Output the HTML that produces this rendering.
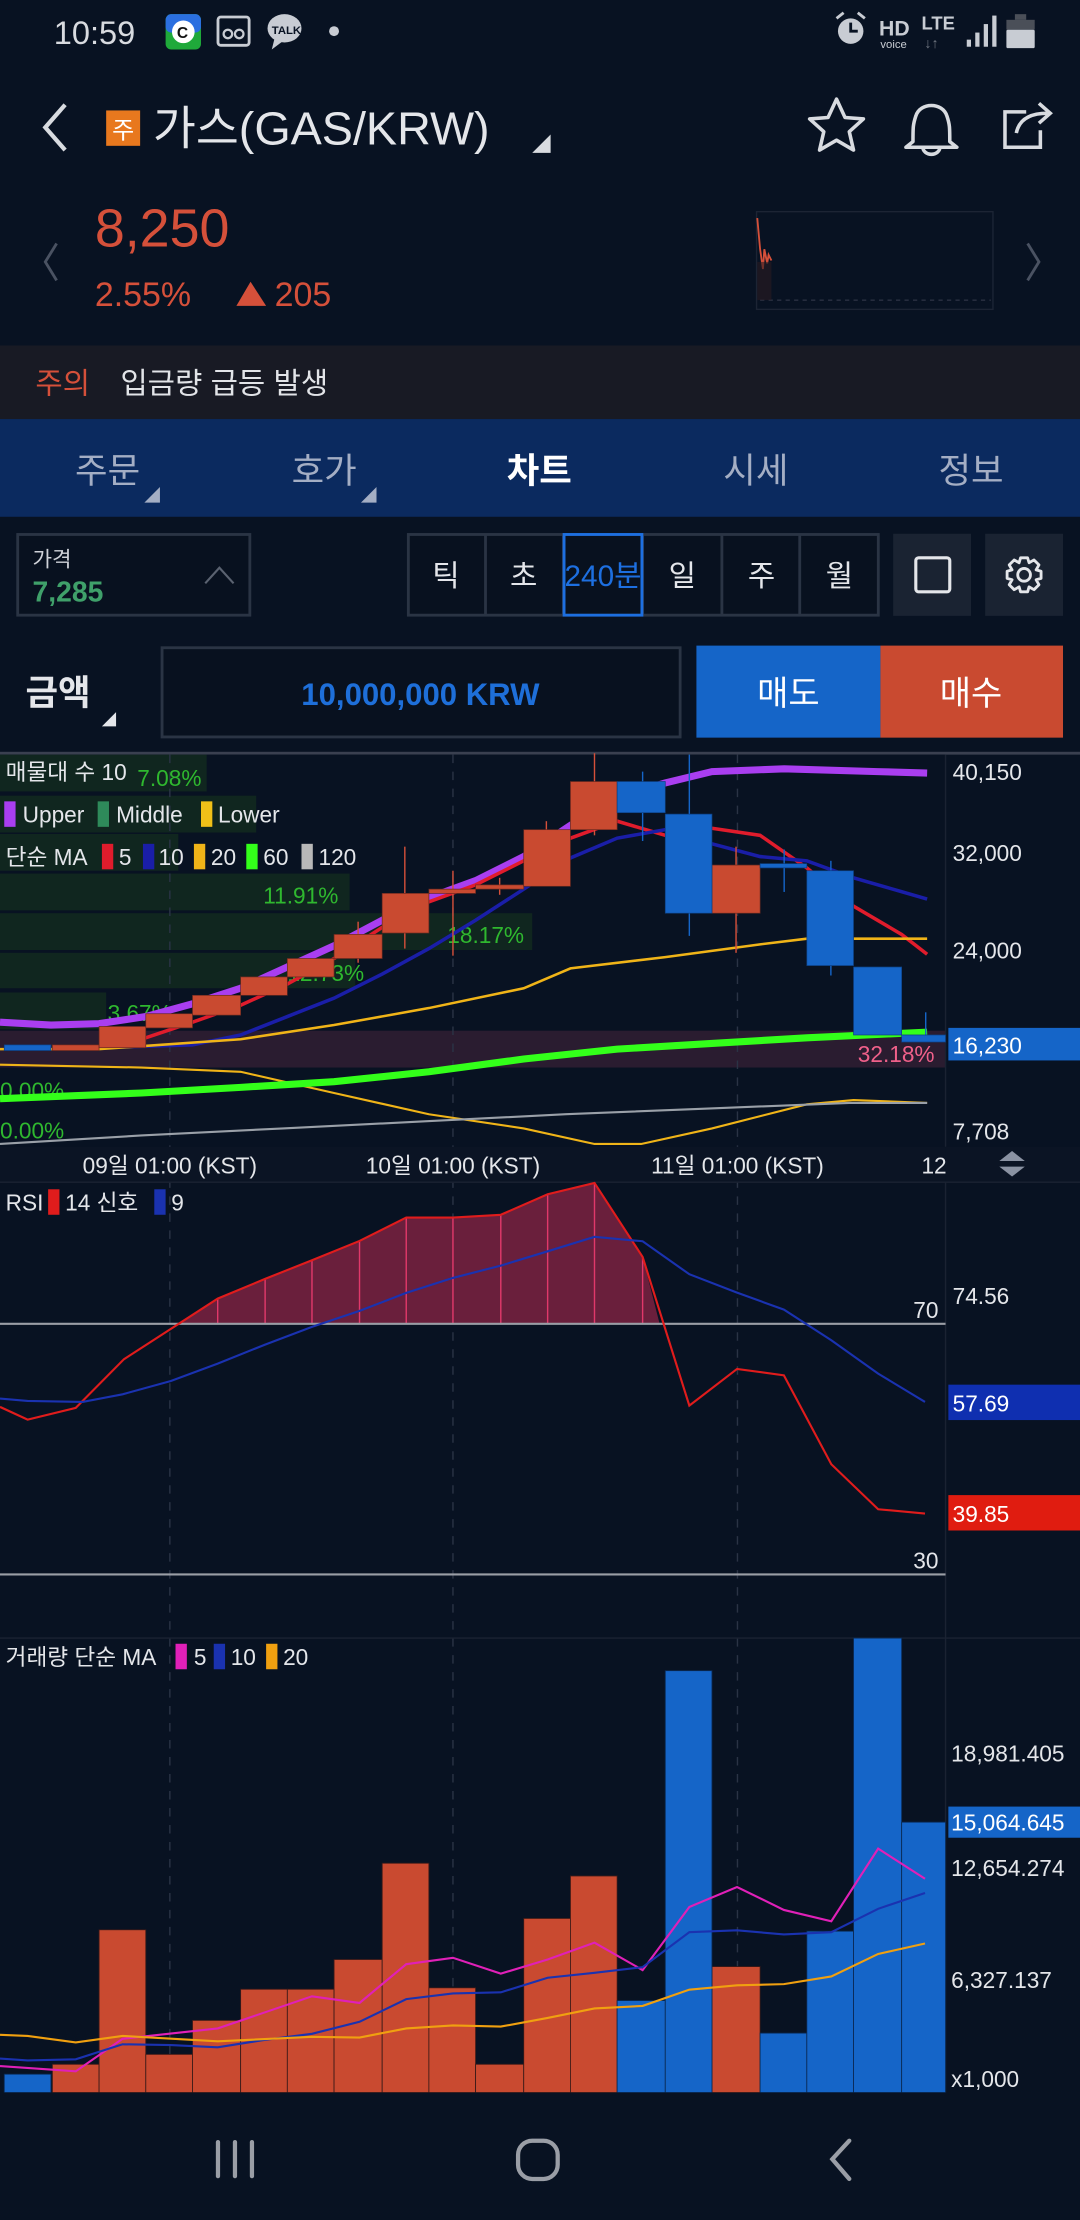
<!DOCTYPE html>
<html><head><meta charset="utf-8"><style>
html,body{margin:0;padding:0;background:#081222;width:1080px;height:2220px;overflow:hidden}
svg{display:block}
text{font-family:"Liberation Sans","Noto Sans CJK KR",sans-serif}
</style></head><body>
<svg width="1080" height="2220" viewBox="0 0 763 1568" preserveAspectRatio="none" xmlns="http://www.w3.org/2000/svg">
<rect width="763" height="1568" fill="#081222"/>
<!-- status bar -->
<text x="38" y="31" font-size="23" fill="#d8dbe0">10:59</text>
<rect x="117" y="10" width="25" height="25" rx="4" fill="#1fa93a"/><rect x="117" y="10" width="25" height="13" rx="4" fill="#2b6fe0"/><circle cx="129.5" cy="22.5" r="8" fill="#fff"/><text x="125" y="27" font-size="11" font-weight="bold" fill="#111">C</text>
<rect x="154" y="12" width="22" height="20" rx="2" fill="none" stroke="#c8ccd3" stroke-width="2"/><circle cx="161" cy="24" r="3" fill="none" stroke="#c8ccd3" stroke-width="1.6"/><circle cx="169" cy="24" r="3" fill="none" stroke="#c8ccd3" stroke-width="1.6"/>
<ellipse cx="201" cy="20" rx="12" ry="10" fill="#c8ccd3"/><path d="M194 27 L192 35 L200 29Z" fill="#c8ccd3"/><text x="192" y="24" font-size="8" fill="#081222" font-weight="bold">TALK</text>
<circle cx="236" cy="22" r="3.5" fill="#c8ccd3"/>
<circle cx="601" cy="22" r="9" fill="#c8ccd3"/><path d="M601 16 V22 H606" stroke="#081222" stroke-width="2" fill="none"/><path d="M591 13 L596 9 M611 13 L606 9" stroke="#c8ccd3" stroke-width="2"/>
<text x="621" y="25" font-size="15" font-weight="bold" fill="#c8ccd3">HD</text><text x="622" y="34" font-size="8" fill="#c8ccd3">voice</text>
<text x="651" y="21" font-size="13" font-weight="bold" fill="#c8ccd3">LTE</text><text x="653" y="34" font-size="10" fill="#6f7580">↓↑</text>
<rect x="683" y="28" width="3" height="5" fill="#c8ccd3"/><rect x="689" y="23" width="3" height="10" fill="#c8ccd3"/><rect x="695" y="17" width="3" height="16" fill="#c8ccd3"/><rect x="701" y="11" width="3" height="22" fill="#c8ccd3"/>
<rect x="717" y="10" width="8" height="4" fill="#4a4f58"/><rect x="711" y="14" width="20" height="7" fill="#4a4f58"/><rect x="711" y="21" width="20" height="13" rx="1" fill="#c8ccd3"/>
<!-- title -->
<path d="M46 74 L32 90 L46 106" stroke="#d8dbe0" stroke-width="3" fill="none"/>
<rect x="75" y="78" width="24" height="25" fill="#e8781e"/><text x="87" y="98" font-size="17" fill="#fff" text-anchor="middle">주</text>
<text x="108" y="102" font-size="33" fill="#e4e6ea">가스(GAS/KRW)</text>
<path d="M376 108 L389 108 L389 95Z" fill="#d8dbe0"/>
<path d="M591 70 L597 83 L610 84 L600 93 L603 106 L591 99 L579 106 L582 93 L572 84 L585 83Z" fill="none" stroke="#d8dbe0" stroke-width="2.5" stroke-linejoin="round"/>
<path d="M645 100 C645 90 645 88 647 82 C650 72 666 72 669 82 C671 88 671 90 671 100 L676 104 H640 Z" fill="none" stroke="#d8dbe0" stroke-width="2.5" stroke-linejoin="round"/><path d="M652 104 A6 5 0 0 0 664 104" fill="none" stroke="#d8dbe0" stroke-width="2.5"/>
<path d="M725 79 H710 V104 H735 V92" fill="none" stroke="#d8dbe0" stroke-width="2.5"/><path d="M718 94 C720 84 728 80 740 80 M734 73 L742 80 L734 87" fill="none" stroke="#d8dbe0" stroke-width="2.5"/>
<!-- price -->
<path d="M40 172 L32 185 L40 198" stroke="#4a5262" stroke-width="2" fill="none"/>
<path d="M726 172 L734 185 L726 198" stroke="#4a5262" stroke-width="2" fill="none"/>
<text x="67" y="174" font-size="38" fill="#d5503a">8,250</text>
<text x="67" y="216" font-size="24" fill="#d5503a">2.55%</text>
<path d="M167 216 L177 199 L188 216Z" fill="#d5503a"/><text x="194" y="216" font-size="24" fill="#d5503a">205</text>
<rect x="534.5" y="149.5" width="167" height="69" fill="none" stroke="#1c2434"/>
<line x1="537" y1="212" x2="700" y2="212" stroke="#2a3142" stroke-dasharray="3,3"/>
<path d="M535 154 L537 176 L539 190 L540 176 L542 186 L543 180 L545 184" stroke="#d5503a" fill="none" stroke-width="1.3"/>
<rect x="535" y="185" width="10" height="27" fill="#2a1a22" opacity="0.6"/>
<!-- notice -->
<rect x="0" y="244" width="763" height="52" fill="#181a24"/>
<text x="25" y="278" font-size="21" fill="#d5503a">주의</text>
<text x="85" y="278" font-size="21" fill="#e2e4e8">입금량 급등 발생</text>
<!-- tabs -->
<rect x="0" y="296" width="763" height="69" fill="#0b2a5f"/>
<g font-size="25" text-anchor="middle" fill="#a4aec4">
<text x="76" y="341">주문</text><text x="229" y="341">호가</text>
<text x="381" y="341" fill="#ffffff" font-weight="bold">차트</text>
<text x="534" y="341">시세</text><text x="686" y="341">정보</text></g>
<path d="M102 355 L113 355 L113 344Z" fill="#a4aec4"/><path d="M255 355 L266 355 L266 344Z" fill="#a4aec4"/>
<!-- controls -->
<rect x="12.5" y="377.5" width="164" height="57" fill="#08111f" stroke="#2a3444" stroke-width="2"/>
<text x="23" y="400" font-size="15" fill="#cfd2d8">가격</text>
<text x="23" y="425" font-size="20" font-weight="bold" fill="#3fa06a">7,285</text>
<path d="M145 412 L155 401 L165 412" stroke="#5a6270" stroke-width="1.5" fill="none"/>
<rect x="288.5" y="377.5" width="332" height="57" fill="#08111f" stroke="#2a3444" stroke-width="2"/>
<g stroke="#2a3444" stroke-width="2"><line x1="343" y1="378" x2="343" y2="434"/><line x1="398" y1="378" x2="398" y2="434"/><line x1="454" y1="378" x2="454" y2="434"/><line x1="510" y1="378" x2="510" y2="434"/><line x1="565" y1="378" x2="565" y2="434"/></g>
<rect x="398.5" y="377.5" width="55" height="57" fill="none" stroke="#1d6fe0" stroke-width="2"/>
<g font-size="21" fill="#e4e6ea" text-anchor="middle"><text x="315" y="414">틱</text><text x="370" y="414">초</text><text x="426" y="414" fill="#1d6fe0">240분</text><text x="482" y="414">일</text><text x="538" y="414">주</text><text x="593" y="414">월</text></g>
<rect x="631" y="377" width="55" height="58" fill="#1a2332"/><rect x="647" y="394" width="24" height="24" rx="2" fill="none" stroke="#e4e6ea" stroke-width="2.2"/>
<rect x="696" y="377" width="55" height="58" fill="#1a2332"/>
<g transform="translate(723.5,406)" fill="none" stroke="#e4e6ea" stroke-width="2"><circle r="4.5"/><path d="M-2.5 -12 H2.5 L3.5 -8.5 L7 -10.5 L10.5 -7 L8.5 -3.5 L12 -2.5 V2.5 L8.5 3.5 L10.5 7 L7 10.5 L3.5 8.5 L2.5 12 H-2.5 L-3.5 8.5 L-7 10.5 L-10.5 7 L-8.5 3.5 L-12 2.5 V-2.5 L-8.5 -3.5 L-10.5 -7 L-7 -10.5 L-3.5 -8.5Z" stroke-linejoin="round"/></g>
<!-- amount -->
<text x="18" y="498" font-size="25" font-weight="bold" fill="#e4e6ea">금액</text>
<path d="M72 513 L82 513 L82 503Z" fill="#e4e6ea"/>
<rect x="114.5" y="457.5" width="366" height="63" fill="#08111f" stroke="#2a3444" stroke-width="2"/>
<text x="297" y="498" font-size="22" font-weight="bold" fill="#1e6fd9" text-anchor="middle">10,000,000 KRW</text>
<rect x="492" y="456" width="130" height="65" fill="#1565c8"/><text x="557" y="498" font-size="24" fill="#fff" text-anchor="middle">매도</text>
<rect x="622" y="456" width="129" height="65" fill="#c94a30"/><text x="686" y="498" font-size="24" fill="#fff" text-anchor="middle">매수</text>
<!-- chart -->
<rect x="0" y="531" width="763" height="2" fill="#3a4050"/>
<rect x="0" y="533" width="668" height="277" fill="#081222"/>
<g fill="#10261f">
<rect x="0" y="533" width="146" height="26"/><rect x="0" y="562" width="181" height="26"/><rect x="0" y="589" width="126" height="26"/>
<rect x="0" y="617" width="247" height="26"/><rect x="0" y="645" width="376" height="26"/><rect x="0" y="673" width="251" height="25"/><rect x="0" y="701" width="75" height="26"/></g>
<rect x="0" y="728" width="668" height="26" fill="#2a1c30"/>
<g stroke="#2a3345" stroke-dasharray="6,6"><line x1="120" y1="533" x2="120" y2="1478"/><line x1="320" y1="533" x2="320" y2="1478"/><line x1="521" y1="533" x2="521" y2="1478"/></g>
<line x1="668" y1="533" x2="668" y2="1478" stroke="#1a2232"/>
<g font-size="16" fill="#2fb82f"><text x="97" y="555">7.08%</text><text x="186" y="638">11.91%</text><text x="316" y="666">18.17%</text><text x="203" y="693">12.73%</text><text x="76" y="721">3.67%</text><text x="0" y="776">0.00%</text><text x="0" y="804">0.00%</text></g>
<text x="606" y="750" font-size="16" fill="#f0608a">32.18%</text>
<!-- lines -->
<polyline fill="none" stroke="#a93ef0" stroke-width="5" points="0,722 36,724 70,723 103,718 136,709 170,698 203,683 236,668 270,650 303,634 336,622 370,605 403,583 436,563 470,553 503,545 554,543 620,545 655,546"/>
<polyline fill="none" stroke="#e01c2c" stroke-width="2.5" points="70,740 103,733 136,722 170,710 203,695 236,677 270,655 303,637 336,625 370,608 403,592 436,580 470,590 503,585 537,590 570,613 603,640 637,660 655,674"/>
<polyline fill="none" stroke="#1a1ea8" stroke-width="2.5" points="70,740 136,738 170,731 203,718 236,705 270,688 303,670 336,650 370,628 403,606 436,592 470,586 503,596 537,605 570,608 603,620 655,635"/>
<polyline fill="none" stroke="#f0b418" stroke-width="1.8" points="0,741 70,741 170,734 236,724 303,712 370,698 403,684 470,676 537,667 570,663 655,663"/>
<polyline fill="none" stroke="#f0b418" stroke-width="1.5" points="0,752 100,754 170,757 236,772 303,787 370,797 420,808 453,808 503,797 570,780 603,777 655,779"/>
<polyline fill="none" stroke="#9aa0a8" stroke-width="1.5" points="0,808 100,802 200,797 300,792 400,787 500,783 600,779 655,779"/>
<polyline fill="none" stroke="#33ff1a" stroke-width="5" points="0,776 100,772 170,768 236,764 303,757 370,748 436,741 503,737 570,733 655,729"/>
<!-- candles -->
<g stroke="#d5503a" stroke-width="1"><line x1="286" y1="598" x2="286" y2="670"/><line x1="320" y1="615" x2="320" y2="675"/><line x1="420" y1="532" x2="420" y2="590"/><line x1="520" y1="598" x2="520" y2="673"/><line x1="253" y1="651" x2="253" y2="680"/><line x1="386" y1="580" x2="386" y2="626"/><line x1="353" y1="620" x2="353" y2="632"/></g>
<g stroke="#1565c8" stroke-width="1"><line x1="454" y1="545" x2="454" y2="594"/><line x1="487" y1="533" x2="487" y2="661"/><line x1="554" y1="600" x2="554" y2="630"/><line x1="587" y1="608" x2="587" y2="689"/><line x1="654" y1="715" x2="654" y2="736"/></g>
<g fill="#c94a30" stroke="#6a2a20" stroke-width="0.5">
<rect x="37" y="738" width="33" height="4"/><rect x="70" y="725" width="33" height="15"/><rect x="103" y="716" width="33" height="10"/><rect x="136" y="703" width="34" height="14"/><rect x="170" y="690" width="33" height="13"/><rect x="203" y="677" width="33" height="13"/><rect x="236" y="660" width="34" height="17"/><rect x="270" y="631" width="33" height="28"/><rect x="303" y="628" width="33" height="3"/><rect x="336" y="625" width="34" height="3"/><rect x="370" y="586" width="33" height="40"/><rect x="403" y="552" width="33" height="34"/><rect x="503" y="611" width="34" height="34"/></g>
<g fill="#1565c8" stroke="#0d3f80" stroke-width="0.5">
<rect x="3" y="738" width="33" height="4"/><rect x="436" y="552" width="34" height="22"/><rect x="470" y="575" width="33" height="70"/><rect x="537" y="610" width="33" height="3"/><rect x="570" y="615" width="33" height="67"/><rect x="603" y="683" width="34" height="48"/><rect x="637" y="731" width="31" height="5"/></g>
<!-- legend -->
<g font-size="16" fill="#e4e6ea"><text x="4" y="551">매물대 수 10</text>
<rect x="3" y="566" width="8" height="18" fill="#a93ef0"/><text x="16" y="581">Upper</text><rect x="69" y="566" width="8" height="18" fill="#2e8a5a"/><text x="82" y="581">Middle</text><rect x="142" y="566" width="8" height="18" fill="#f0c018"/><text x="154" y="581">Lower</text>
<text x="4" y="611">단순 MA</text><rect x="72" y="596" width="8" height="18" fill="#e01c2c"/><text x="84" y="611">5</text><rect x="101" y="596" width="8" height="18" fill="#1a1ea8"/><text x="112" y="611">10</text><rect x="137" y="596" width="8" height="18" fill="#f0b418"/><text x="149" y="611">20</text><rect x="174" y="596" width="8" height="18" fill="#33ff1a"/><text x="186" y="611">60</text><rect x="213" y="596" width="8" height="18" fill="#b8b8b8"/><text x="225" y="611">120</text></g>
<!-- right axis main -->
<g font-size="16" fill="#e4e6ea"><text x="673" y="551">40,150</text><text x="673" y="608">32,000</text><text x="673" y="677">24,000</text><text x="673" y="805">7,708</text></g>
<rect x="670" y="726" width="93" height="23" fill="#1565c8"/><text x="673" y="744" font-size="16" fill="#fff">16,230</text>
<!-- time axis -->
<rect x="0" y="810" width="763" height="25" fill="#0b1424"/>
<g font-size="16" fill="#e4e6ea" text-anchor="middle"><text x="120" y="829">09일 01:00 (KST)</text><text x="320" y="829">10일 01:00 (KST)</text><text x="521" y="829">11일 01:00 (KST)</text></g>
<text x="651" y="829" font-size="16" fill="#e4e6ea">12</text>
<rect x="668" y="810" width="95" height="25" fill="#0b1424"/>
<path d="M706 820 L715 813 L724 820Z M706 824 L715 831 L724 824Z" fill="#8a92a2"/>
<!-- RSI -->
<line x1="0" y1="835" x2="763" y2="835" stroke="#1a2232"/>
<path fill="#6a1f3c" d="M125,935 L153.8,917.2 187.3,903.3 220.4,890.1 254,876.5 287,860 320,860 353.8,858 386.9,843.5 420,835.5 454,887.8 466,935Z"/>
<g stroke="#e0386a" stroke-width="1"><line x1="153.8" y1="917" x2="153.8" y2="935"/><line x1="187.3" y1="903" x2="187.3" y2="935"/><line x1="220.4" y1="890" x2="220.4" y2="935"/><line x1="254" y1="876" x2="254" y2="935"/><line x1="287" y1="860" x2="287" y2="935"/><line x1="320" y1="860" x2="320" y2="935"/><line x1="353.8" y1="858" x2="353.8" y2="935"/><line x1="386.9" y1="843" x2="386.9" y2="935"/><line x1="420" y1="836" x2="420" y2="935"/><line x1="454" y1="888" x2="454" y2="935"/></g>
<line x1="0" y1="935" x2="668" y2="935" stroke="#9a9ea6" stroke-width="1.5"/>
<line x1="0" y1="1112" x2="668" y2="1112" stroke="#9a9ea6" stroke-width="1.5"/>
<polyline fill="none" stroke="#e01c1c" stroke-width="1.5" points="0,993.7 19.5,1002.7 53.5,994.4 87.6,960 153.8,917.2 187.3,903.3 220.4,890.1 254,876.5 287,860 320,860 353.8,858 386.9,843.5 420,835.5 454,887.8 487,992.8 520.7,966.9 553.8,971.4 587.3,1034.2 620.4,1066 653.5,1069"/>
<polyline fill="none" stroke="#1a32b0" stroke-width="1.5" points="0,987.8 19.5,989.5 58.4,990.2 86.6,984.8 120.7,975.4 153.8,963.1 187.3,949.7 220.4,937.2 254,925.9 287,913.2 320,902.6 353.8,893.9 386.9,883.8 420,873.6 454,876.7 487,900 520.7,913 553.8,925 587.3,946.6 620.4,970.2 653.5,990.2"/>
<g font-size="16" fill="#e4e6ea"><text x="4" y="855">RSI</text><rect x="34" y="840" width="8" height="18" fill="#e01c1c"/><text x="46" y="855">14 신호</text><rect x="109" y="840" width="8" height="18" fill="#1a32b0"/><text x="121" y="855">9</text>
<text x="663" y="931" text-anchor="end">70</text><text x="663" y="1108" text-anchor="end">30</text><text x="673" y="921">74.56</text></g>
<rect x="670" y="978" width="93" height="25" fill="#0f2fb0"/><text x="673" y="997" font-size="16" fill="#fff">57.69</text>
<rect x="670" y="1056" width="93" height="25" fill="#e01c10"/><text x="673" y="1075" font-size="16" fill="#fff">39.85</text>
<!-- Volume -->
<line x1="0" y1="1157" x2="763" y2="1157" stroke="#1a2232"/>
<g fill="#c94a30" stroke="#3a1a18" stroke-width="0.6">
<rect x="37" y="1458" width="33" height="20"/><rect x="70" y="1363" width="33" height="115"/><rect x="103" y="1451" width="33" height="27"/><rect x="136" y="1427" width="34" height="51"/><rect x="170" y="1405" width="33" height="73"/><rect x="203" y="1405" width="33" height="73"/><rect x="236" y="1384" width="34" height="94"/><rect x="270" y="1316" width="33" height="162"/><rect x="303" y="1404" width="33" height="74"/><rect x="336" y="1458" width="34" height="20"/><rect x="370" y="1355" width="33" height="123"/><rect x="403" y="1325" width="33" height="153"/><rect x="503" y="1389" width="34" height="89"/></g>
<g fill="#1565c8" stroke="#0a2a55" stroke-width="0.6">
<rect x="3" y="1465" width="33" height="13"/><rect x="436" y="1413" width="34" height="65"/><rect x="470" y="1180" width="33" height="298"/><rect x="537" y="1436" width="33" height="42"/><rect x="570" y="1364" width="33" height="114"/><rect x="603" y="1157" width="34" height="321"/><rect x="637" y="1287" width="31" height="191"/></g>
<polyline fill="none" stroke="#e020b8" stroke-width="1.5" points="0,1459.3 53.5,1463 86.6,1440 153.8,1432.7 220.4,1410 254,1414.7 287,1387.3 320,1382.8 353.8,1394 386.9,1384 420,1372.1 454,1391.5 487,1346.9 520.7,1332.8 553.8,1349 587.3,1357 620.4,1305.7 653.5,1327"/>
<polyline fill="none" stroke="#1a32b0" stroke-width="1.5" points="0,1454 19.5,1455.3 53.5,1454.5 86.6,1443.9 120.7,1444.4 153.8,1446 187.3,1440.7 220.4,1436.5 254,1428 287,1412 320,1408 353.8,1407.2 386.9,1396.9 420,1393.4 454,1389.4 487,1364.7 520.7,1363.4 553.8,1366.3 587.3,1364.7 620.4,1348.2 653.5,1337"/>
<polyline fill="none" stroke="#f0a010" stroke-width="1.5" points="0,1437.2 19.5,1438 53.5,1442.6 86.6,1438 153.8,1441.8 220.4,1438.6 254,1439.1 287,1432.7 320,1430.6 353.8,1431.4 386.9,1425.3 420,1418.6 454,1416.8 487,1405.3 520.7,1402.2 553.8,1401.4 587.3,1396 620.4,1380.1 653.5,1372.7"/>
<g font-size="16" fill="#e4e6ea"><text x="4" y="1176">거래량 단순 MA</text><rect x="124" y="1161" width="8" height="18" fill="#e020b8"/><text x="137" y="1176">5</text><rect x="151" y="1161" width="8" height="18" fill="#1a32b0"/><text x="163" y="1176">10</text><rect x="188" y="1161" width="8" height="18" fill="#f0a010"/><text x="200" y="1176">20</text>
<text x="672" y="1244">18,981.405</text><text x="672" y="1325">12,654.274</text><text x="672" y="1404">6,327.137</text><text x="672" y="1474">x1,000</text></g>
<rect x="670" y="1276" width="93" height="22" fill="#1565c8"/><text x="672" y="1293" font-size="16" fill="#fff">15,064.645</text>
<!-- nav -->
<rect x="0" y="1478" width="763" height="90" fill="#081222"/>
<g stroke="#9a9ea6" stroke-width="3" fill="none" stroke-linecap="round"><line x1="154" y1="1513" x2="154" y2="1537"/><line x1="166" y1="1513" x2="166" y2="1537"/><line x1="178" y1="1513" x2="178" y2="1537"/>
<rect x="366" y="1512" width="28" height="27" rx="10"/><path d="M600 1512 L588 1525 L600 1539"/></g>
</svg>
</body></html>
